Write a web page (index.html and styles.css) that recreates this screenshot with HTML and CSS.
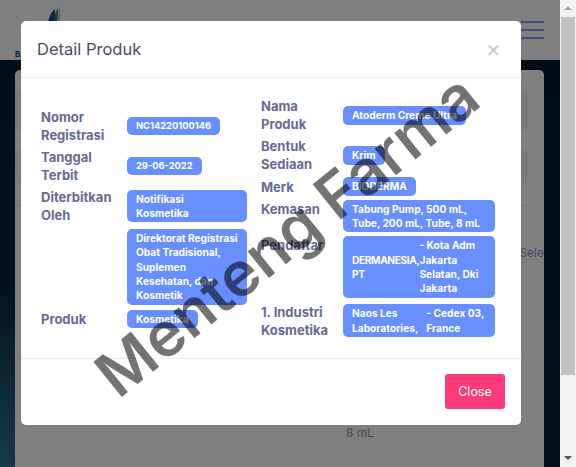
FILE: index.html
```html
<!DOCTYPE html>
<html lang="id">
  <head>
    <meta charset="UTF-8" />
    <meta name="viewport" content="width=device-width, initial-scale=1.0" />
    <title>Detail Produk</title>
    <link rel="stylesheet" href="styles.css">
  </head>
  <body>
    <div class="page">
      <!-- Page behind the modal -->
      <header class="site-header">
        <div class="brand">
          <svg class="brand-leaf" width="14" height="24" viewBox="0 0 14 24">
            <path d="M1 24 C2 14 4 7 9 3 L8 24 Z" fill="#1b3f8b" />
            <path d="M7 24 C7 14 9 6 12 2 L11 24 Z" fill="#1f8a4c" />
            <path d="M11 24 C11 13 12 5 14 0 L13.5 24 Z" fill="#bcbcbc" />
          </svg>
          <span class="brand-name">BA</span>
        </div>
        <div class="hamburger"><span></span><span></span><span></span></div>
      </header>
      <main class="site-main">
        <div class="back-card">
          <div class="back-field"></div>
          <div class="back-field back-field-short"></div>
          <div class="back-divider"></div>
          <p class="back-select">Sele</p>
          <p class="back-size">8 mL</p>
        </div>
      </main>
      <div class="overlay"></div>

      <!-- Modal -->
      <div class="modal">
        <div class="modal-header">
          <h2>Detail Produk</h2>
          <button class="modal-close">&times;</button>
        </div>
        <div class="modal-body">
          <div class="detail-col detail-col-left">
            <div class="detail-row">
              <div class="label">Nomor Registrasi</div>
              <div class="badge badge-num">NC14220100146</div>
            </div>
            <div class="detail-row">
              <div class="label">Tanggal Terbit</div>
              <div class="badge badge-num">29-06-2022</div>
            </div>
            <div class="detail-row">
              <div class="label">Diterbitkan Oleh</div>
              <div class="badge">Notifikasi Kosmetika</div>
            </div>
            <div class="detail-row detail-row-gap">
              <div class="label"></div>
              <div class="badge">Direktorat Registrasi Obat Tradisional, Suplemen Kesehatan, dan Kosmetik</div>
            </div>
            <div class="detail-row detail-row-gap">
              <div class="label">Produk</div>
              <div class="badge">Kosmetika</div>
            </div>
          </div>
          <div class="detail-col detail-col-right">
            <div class="detail-row">
              <div class="label">Nama Produk</div>
              <div class="badge">Atoderm Creme Ultra</div>
            </div>
            <div class="detail-row">
              <div class="label">Bentuk Sediaan</div>
              <div class="badge">Krim</div>
            </div>
            <div class="detail-row">
              <div class="label">Merk</div>
              <div class="badge">BIODERMA</div>
            </div>
            <div class="detail-row detail-row-top">
              <div class="label">Kemasan</div>
              <div class="badge">Tabung Pump, 500 mL, Tube, 200 mL, Tube, 8 mL</div>
            </div>
            <div class="detail-row detail-row-top">
              <div class="label">Pendaftar</div>
              <div class="badge badge-split">
                <span class="split-name split-tight">DERMANESIA,<br>PT</span>
                <span class="split-place">- Kota Adm Jakarta Selatan, Dki Jakarta</span>
              </div>
            </div>
            <div class="detail-row detail-row-gap">
              <div class="label">1. Industri Kosmetika</div>
              <div class="badge badge-split">
                <span class="split-name">Naos Les<br>Laboratories,</span>
                <span class="split-place split-gap">- Cedex 03, France</span>
              </div>
            </div>
          </div>
        </div>
        <div class="modal-footer">
          <button class="close-btn">Close</button>
        </div>
      </div>

      <div class="watermark">Menteng Farma</div>
    </div>

    <!-- Page scrollbar -->
    <div class="scrollbar">
      <span class="arrow-up"></span>
      <div class="thumb"></div>
      <span class="arrow-down"></span>
    </div>
  </body>
</html>
```

FILE: styles.css
```css
/* Reset CSS */
* {
  margin: 0;
  padding: 0;
  box-sizing: border-box;
  font-family: "Inter", "Liberation Sans", sans-serif;
}

body {
  display: flex;
  width: 576px;
  height: 467px;
  overflow: hidden;
}

.page {
  position: relative;
  flex: 1;
  display: flex;
  flex-direction: column;
  overflow: hidden;
}

/* Page behind the modal */
.site-header {
  height: 60px;
  background-color: #fff;
  display: flex;
  justify-content: space-between;
  padding: 6px 16px 0 15px;
}

.brand {
  display: flex;
  flex-direction: column;
  width: 60px;
}

.brand-leaf {
  margin-left: 31px;
}

.brand-name {
  margin-top: 19px;
  font-size: 8px;
  font-weight: 700;
  color: #1b3f8b;
}

.hamburger {
  width: 23px;
  display: flex;
  flex-direction: column;
  gap: 6px;
  padding-top: 15px;
}

.hamburger span {
  height: 2px;
  background-color: #7e9bff;
}

.site-main {
  flex: 1;
  padding: 10px 16px 0 15px;
  background: linear-gradient(20deg, #2f7597 0%, #04263f 30%, #02192c 100%);
}

.back-card {
  position: relative;
  height: 100%;
  background-color: #fff;
  border-radius: 5px 5px 0 0;
  padding: 20px 16px 0 0;
}

.back-field {
  height: 40px;
  background-color: #f5f5f8;
  border-radius: 4px;
  margin-bottom: 20px;
}

.back-field-short {
  height: 34px;
}

.back-divider {
  height: 1px;
  background-color: #e8e8e8;
  margin-top: 21px;
}

.back-select {
  position: absolute;
  top: 175px;
  right: 0;
  font-size: 12px;
  color: #8f94b0;
}

.back-size {
  position: absolute;
  top: 355px;
  left: 331px;
  font-size: 12px;
  color: #8f94b0;
}

.overlay {
  position: absolute;
  inset: 0;
  background-color: rgba(0, 0, 0, 0.5);
}

/* Modal */
.modal {
  position: absolute;
  top: 21px;
  left: 21px;
  width: 500px;
  height: 404px;
  background-color: #fff;
  border-radius: 5px;
  display: flex;
  flex-direction: column;
}

.modal-header {
  height: 57px;
  border-bottom: 1px solid #e9ecef;
  display: flex;
  justify-content: space-between;
  align-items: center;
  padding: 0 20px 0 16px;
}

.modal-header h2 {
  font-size: 16.5px;
  font-weight: 400;
  color: #4c4c66;
}

.modal-close {
  background: none;
  border: none;
  font-size: 23px;
  font-weight: 400;
  line-height: 1;
  color: #c4c6d3;
  cursor: pointer;
}

.modal-body {
  height: 280px;
  display: flex;
  align-items: center;
  padding-left: 20px;
}

.detail-col {
  display: flex;
  flex-direction: column;
  gap: 4px;
}

.detail-col-left {
  width: 220px;
}

.detail-row {
  display: grid;
  align-items: center;
}

.detail-row-gap {
  margin-top: 1px;
}

.detail-col-left .detail-row {
  grid-template-columns: 86px 120px;
}

.detail-col-right .detail-row {
  grid-template-columns: 82px 152px;
}

.detail-row-top {
  align-items: start;
}

.label {
  font-size: 13px;
  font-weight: 700;
  line-height: 18px;
  color: #666a92;
}

.badge {
  justify-self: start;
  background-color: #678fff;
  color: #fff;
  font-size: 10.2px;
  font-weight: 700;
  line-height: 14.3px;
  padding: 2px 9px;
  border-radius: 5px;
}

.badge-num {
  font-size: 9.3px;
}

.badge-split {
  width: 100%;
  display: flex;
  align-items: center;
}

.split-name {
  flex: 0 0 auto;
}

.split-tight {
  letter-spacing: -0.4px;
}

.split-gap {
  margin-left: 8px;
}

.modal-footer {
  flex: 1;
  border-top: 1px solid #e9ecef;
  display: flex;
  justify-content: flex-end;
  padding: 15px 16px 0 0;
}

.close-btn {
  width: 60px;
  height: 35px;
  background-color: #ff3a79;
  color: #fff;
  border: none;
  border-radius: 3px;
  font-size: 12.5px;
  cursor: pointer;
}

/* Watermark over everything */
.watermark {
  position: absolute;
  top: 197px;
  left: 47px;
  width: 480px;
  text-align: center;
  font-size: 62px;
  font-weight: 600;
  line-height: 76px;
  white-space: nowrap;
  color: rgba(0, 0, 0, 0.55);
  transform: rotate(-39deg);
  pointer-events: none;
}

/* Page scrollbar */
.scrollbar {
  width: 16px;
  background-color: #f1f1f1;
  display: flex;
  flex-direction: column;
  align-items: center;
  padding-top: 6px;
}

.arrow-up {
  border-left: 4px solid transparent;
  border-right: 4px solid transparent;
  border-bottom: 4px solid #a3a3a3;
}

.thumb {
  width: 14px;
  height: 358px;
  margin-top: 7px;
  background-color: #c1c1c1;
}

.arrow-down {
  margin-top: 81px;
  border-left: 4px solid transparent;
  border-right: 4px solid transparent;
  border-top: 4px solid #505050;
}
```
